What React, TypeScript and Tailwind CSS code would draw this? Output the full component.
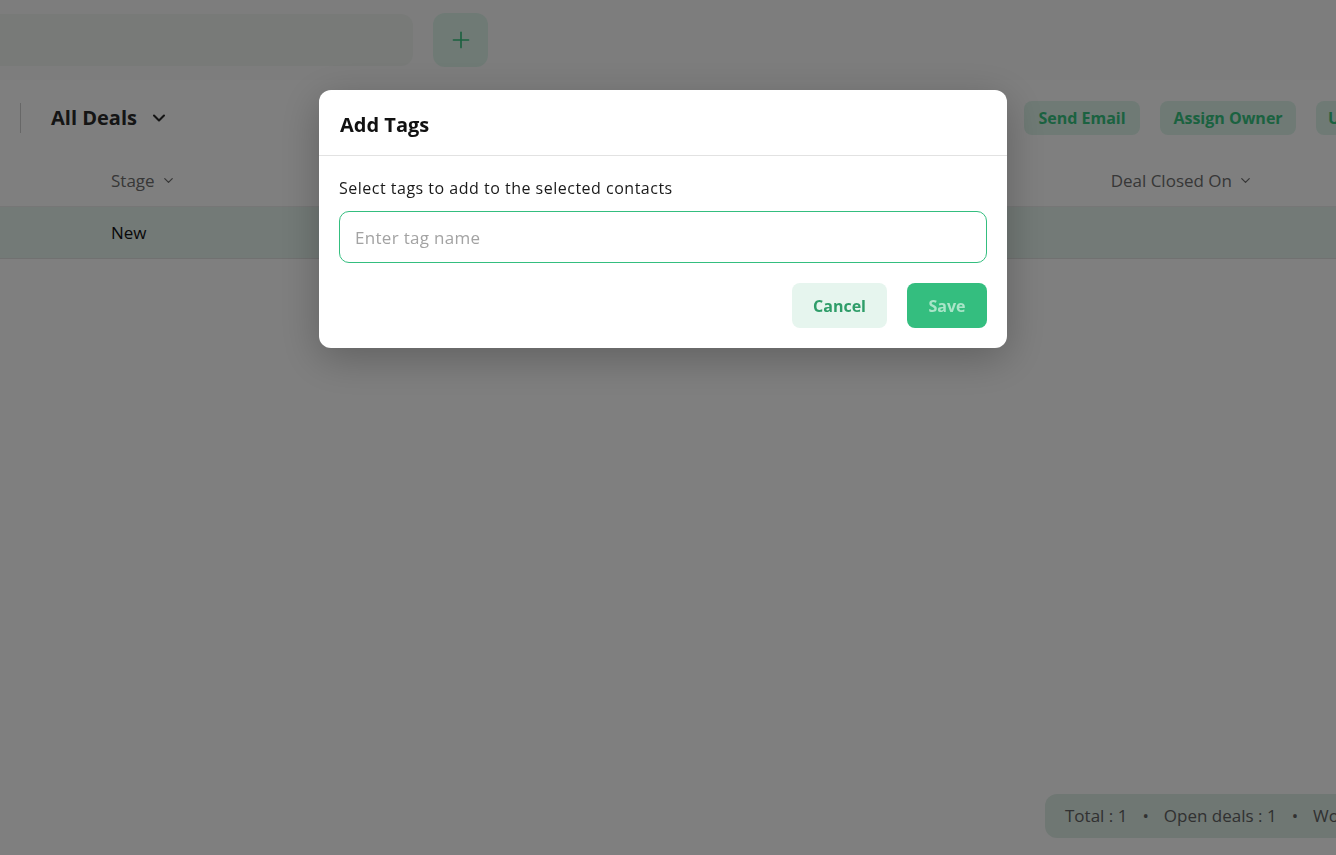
import { ChevronDown, Plus } from "lucide-react";

const FONT = { fontFamily: "'Open Sans', Lato, sans-serif" };

function HeaderCell({ label, className }: { label: string; className?: string }) {
    return (
        <div className={"flex items-center gap-1.5 text-[17px] text-[#6e6e6e] " + (className || "")}>
            {label}
            <ChevronDown size={15} strokeWidth={2} />
        </div>
    );
}

function AddTagsModal() {
    return (
        <div className="fixed inset-0 z-20 flex justify-center items-start pt-[90px] pr-[10px]">
            <div className="w-[688px] bg-white rounded-xl shadow-[0_10px_40px_rgba(0,0,0,0.25)]">
                <div className="h-[66px] flex items-center pt-1 px-[21px] border-b border-[#e2e2e2]">
                    <h2 className="text-[20px] font-bold text-[#111]">Add Tags</h2>
                </div>
                <div className="px-5 pt-[22px] pb-5">
                    <p className="text-[16px] tracking-[0.5px] text-[#1a1a1a] leading-5">Select tags to add to the selected contacts</p>
                    <input
                        className="mt-[13px] w-full h-[52px] rounded-[10px] border border-[#34be7f] px-[15px] text-[17px] tracking-[0.3px] outline-none placeholder:text-[#a3a3a3]"
                        placeholder="Enter tag name"
                    />
                    <div className="mt-5 flex justify-end gap-5">
                        <button className="w-[95px] h-[45px] rounded-lg bg-[#e6f5ee] text-[#2f9d69] text-[16px] font-bold">Cancel</button>
                        <button className="w-[80px] h-[45px] rounded-lg bg-[#34be7f] text-[#a9e5c8] text-[16px] font-bold">Save</button>
                    </div>
                </div>
            </div>
        </div>
    );
}

export default function App() {
    return (
        <div className="relative h-[855px] w-[1336px] overflow-hidden bg-white" style={FONT}>
            {/* top bar */}
            <div className="h-20 bg-[#fafafa] flex items-center gap-5">
                <div className="w-[413px] h-[52px] rounded-r-xl bg-[#f0f4f1]"></div>
                <button className="w-[55px] h-[54px] rounded-xl bg-[#def5eb] flex items-center justify-center text-[#36c27f]">
                    <Plus size={26} strokeWidth={1.5} />
                </button>
            </div>

            {/* toolbar */}
            <div className="h-[75px] flex items-center">
                <div className="ml-5 w-px h-[30px] bg-[#cfcfcf]"></div>
                <div className="ml-[30px] flex items-center gap-3 text-[20px] font-bold text-[#2a2a2a]">
                    All Deals
                    <ChevronDown size={20} strokeWidth={2.5} />
                </div>
                <div className="ml-auto flex items-center gap-5 -mr-10">
                    <button className="w-[116px] h-[34px] rounded-lg bg-[#def5eb] text-[#36c481] text-[16px] font-bold">Send Email</button>
                    <button className="w-[136px] h-[34px] rounded-lg bg-[#def5eb] text-[#36c481] text-[16px] font-bold">Assign Owner</button>
                    <button className="w-[60px] h-[34px] pl-3 rounded-lg bg-[#def5eb] text-[#36c481] text-[16px] font-bold text-left overflow-hidden whitespace-nowrap">Update</button>
                </div>
            </div>

            {/* table */}
            <div className="h-[52px] flex items-center border-b border-[#ececec]">
                <HeaderCell label="Stage" className="ml-[111px]" />
                <HeaderCell label="Deal Closed On" className="ml-auto mr-[83px]" />
            </div>
            <div className="h-[52px] flex items-center bg-[#e6f4ee] border-b border-[#e2e2e2]">
                <span className="ml-[111px] text-[17px] text-[#111]">New</span>
            </div>

            {/* footer summary */}
            <div className="absolute left-[1045px] top-[794px] h-[44px] pl-5 pr-10 rounded-xl bg-[#dfeee7] flex items-center gap-[15px] text-[17px] text-[#626262] whitespace-nowrap">
                <span>Total : 1</span>
                <span>•</span>
                <span>Open deals : 1</span>
                <span>•</span>
                <span>Won deals : 0</span>
            </div>

            {/* overlay */}
            <div className="fixed inset-0 z-10 bg-black/50"></div>
            <AddTagsModal />
        </div>
    );
}
